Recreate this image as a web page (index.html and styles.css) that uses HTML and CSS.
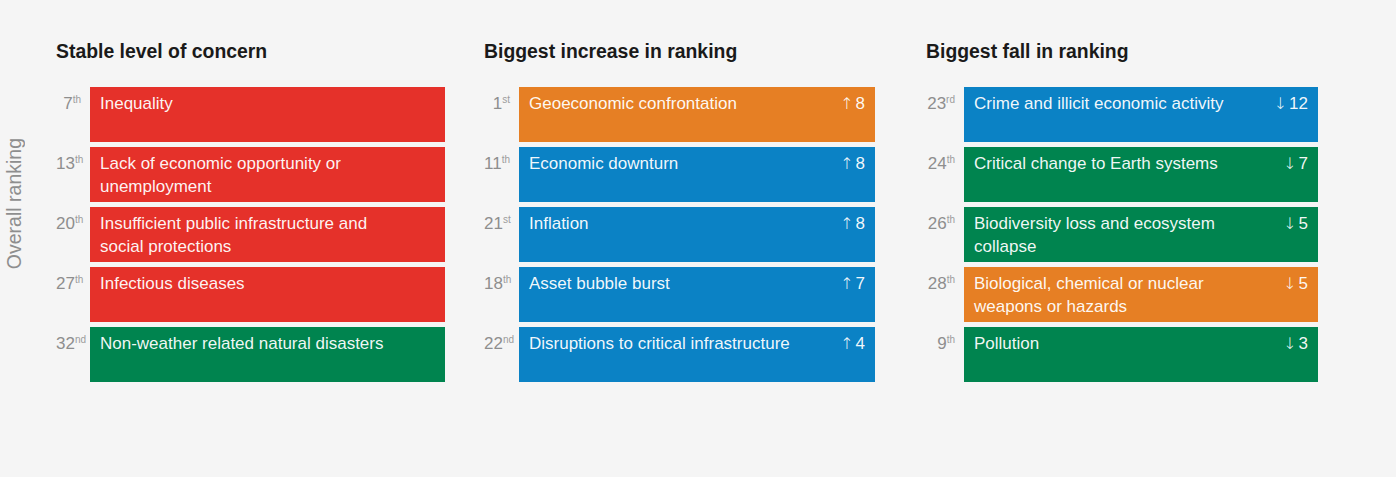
FILE: index.html
```html
<!DOCTYPE html>
<html lang="en">
<head>
<meta charset="utf-8">
<title>Overall ranking</title>
<link rel="stylesheet" href="styles.css">
</head>
<body>
<div class="chart">
  <div class="axis-label">Overall ranking</div>

  <section class="group g1">
    <h2 class="group-title">Stable level of concern</h2>
    <ol class="rows">
      <li class="row"><span class="rank">7<sup>th</sup></span><div class="box red"><span class="name">Inequality</span></div></li>
      <li class="row"><span class="rank">13<sup>th</sup></span><div class="box red"><span class="name">Lack of economic opportunity or unemployment</span></div></li>
      <li class="row"><span class="rank">20<sup>th</sup></span><div class="box red"><span class="name">Insufficient public infrastructure and social protections</span></div></li>
      <li class="row"><span class="rank">27<sup>th</sup></span><div class="box red"><span class="name">Infectious diseases</span></div></li>
      <li class="row"><span class="rank">32<sup>nd</sup></span><div class="box green"><span class="name">Non-weather related natural disasters</span></div></li>
    </ol>
  </section>

  <section class="group g2">
    <h2 class="group-title">Biggest increase in ranking</h2>
    <ol class="rows">
      <li class="row"><span class="rank">1<sup>st</sup></span><div class="box orange"><span class="name">Geoeconomic confrontation</span><span class="change"><span class="arrow">↑</span>8</span></div></li>
      <li class="row"><span class="rank">11<sup>th</sup></span><div class="box blue"><span class="name">Economic downturn</span><span class="change"><span class="arrow">↑</span>8</span></div></li>
      <li class="row"><span class="rank">21<sup>st</sup></span><div class="box blue"><span class="name">Inflation</span><span class="change"><span class="arrow">↑</span>8</span></div></li>
      <li class="row"><span class="rank">18<sup>th</sup></span><div class="box blue"><span class="name">Asset bubble burst</span><span class="change"><span class="arrow">↑</span>7</span></div></li>
      <li class="row"><span class="rank">22<sup>nd</sup></span><div class="box blue"><span class="name">Disruptions to critical infrastructure</span><span class="change"><span class="arrow">↑</span>4</span></div></li>
    </ol>
  </section>

  <section class="group g3">
    <h2 class="group-title">Biggest fall in ranking</h2>
    <ol class="rows">
      <li class="row"><span class="rank">23<sup>rd</sup></span><div class="box blue"><span class="name">Crime and illicit economic activity</span><span class="change"><span class="arrow">↓</span>12</span></div></li>
      <li class="row"><span class="rank">24<sup>th</sup></span><div class="box green"><span class="name">Critical change to Earth systems</span><span class="change"><span class="arrow">↓</span>7</span></div></li>
      <li class="row"><span class="rank">26<sup>th</sup></span><div class="box green"><span class="name">Biodiversity loss and ecosystem collapse</span><span class="change"><span class="arrow">↓</span>5</span></div></li>
      <li class="row"><span class="rank">28<sup>th</sup></span><div class="box orange"><span class="name">Biological, chemical or nuclear weapons or hazards</span><span class="change"><span class="arrow">↓</span>5</span></div></li>
      <li class="row"><span class="rank">9<sup>th</sup></span><div class="box green"><span class="name">Pollution</span><span class="change"><span class="arrow">↓</span>3</span></div></li>
    </ol>
  </section>
</div>
</body>
</html>
```
FILE: styles.css
```css
html, body {
  margin: 0;
  padding: 0;
  background: #f5f5f5;
}

body {
  font-family: "Liberation Sans", Arial, sans-serif;
  color: #1a1a1a;
  width: 1396px;
  height: 477px;
  overflow: hidden;
}

.chart {
  display: grid;
  grid-template-columns: 56px 428px 442px 392px;
  padding-top: 39px;
}

.axis-label {
  writing-mode: vertical-rl;
  transform: rotate(180deg);
  font-size: 19.5px;
  line-height: 22px;
  color: #8e8e8e;
  align-self: start;
  justify-self: start;
  margin-top: 99px;
  margin-left: 3px;
  white-space: nowrap;
}

.group-title {
  margin: 0 0 24px 0;
  font-size: 19.4px;
  line-height: 24px;
  font-weight: bold;
  color: #1a1a1a;
  white-space: nowrap;
}

.rows {
  list-style: none;
  margin: 0;
  padding: 0;
  display: flex;
  flex-direction: column;
  gap: 5px;
}

.row {
  display: flex;
  height: 55px;
}

.rank {
  flex: none;
  width: 34px;
  box-sizing: border-box;
  padding: 5px 9px 0 0;
  text-align: right;
  font-size: 17px;
  line-height: 23px;
  color: #8e8e8e;
  white-space: nowrap;
}

.g2 .rank { width: 35px; }
.g3 .rank { width: 38px; }

.rank sup {
  font-size: 10px;
  line-height: 0;
  vertical-align: 6px;
  color: #9c9c9c;
}

.box {
  flex: none;
  display: flex;
  justify-content: space-between;
  align-items: flex-start;
  box-sizing: border-box;
  padding: 5px 10px 0 10px;
  font-size: 17px;
  line-height: 23px;
  color: rgba(255, 255, 255, 0.94);
}

.g1 .box { width: 355px; }
.g2 .box { width: 356px; }
.g3 .box { width: 354px; }

.name {
  max-width: 275px;
}

.g1 .name {
  max-width: 300px;
}

.change {
  white-space: nowrap;
}

.arrow {
  font-family: "DejaVu Sans", sans-serif;
  font-weight: 200;
  font-size: 16px;
  margin-right: 2px;
}

.red { background: #e5312a; }
.orange { background: #e67f24; }
.blue { background: #0b82c5; }
.green { background: #00844f; }
```
